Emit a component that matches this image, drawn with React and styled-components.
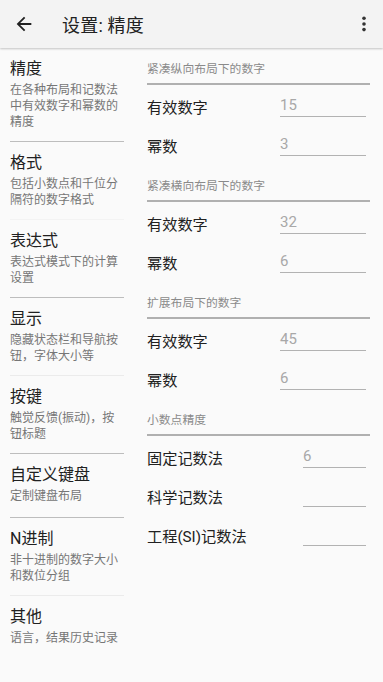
import styled, { createGlobalStyle } from "styled-components";

const GlobalStyle = createGlobalStyle`
  html, body {
    margin: 0;
    padding: 0;
    background: #fafafa;
  }
  body {
    font-family: Roboto, "Noto Sans CJK SC", sans-serif;
    color: #212121;
  }
`;

const Page = styled.div`
  width: 383px;
  height: 682px;
  display: flex;
  flex-direction: column;
  background: #fafafa;
  overflow: hidden;
`;

const AppBar = styled.header`
  height: 48px;
  flex-shrink: 0;
  display: flex;
  align-items: center;
  background: #f3f3f3;
  box-shadow: 0 1px 2px rgba(0, 0, 0, 0.22);
  position: relative;
  z-index: 1;
`;

const IconButton = styled.div`
  width: 24px;
  height: 24px;
  display: flex;
  align-items: center;
  justify-content: center;
  margin-left: ${(p) => p.$ml || 0}px;
  margin-right: ${(p) => p.$mr || 0}px;
`;

const Title = styled.h1`
  margin: 0 0 0 26px;
  flex: 1;
  font-size: 18px;
  font-weight: 400;
  color: #212121;
  letter-spacing: 0.2px;
`;

const Body = styled.div`
  flex: 1;
  display: flex;
`;

const Nav = styled.nav`
  width: 114px;
  padding-left: 10px;
  flex-shrink: 0;
`;

const NavItem = styled.div`
  padding: 10px 0 ${(p) => (p.$single ? 13 : 11)}px;
  border-bottom: 1px solid ${(p) => p.$line || "transparent"};
`;

const NavTitle = styled.div`
  font-size: 16px;
  line-height: 21px;
  color: #212121;
`;

const NavSub = styled.div`
  margin-top: 3px;
  font-size: 12px;
  line-height: 16px;
  color: #767676;
`;

const Panel = styled.main`
  margin-left: 23px;
  width: 223px;
`;

const Section = styled.section`
  padding-top: 14px;

  &:first-child {
    padding-top: 13px;
  }
`;

const SectionHeader = styled.div`
  font-size: 11.8px;
  line-height: 16px;
  color: #8a8a8a;
  padding-bottom: 6px;
  border-bottom: 2px solid #b0b0b0;
`;

const Rows = styled.div`
  padding-top: 1px;
`;

const Row = styled.div`
  height: 39px;
  display: flex;
  align-items: center;
  justify-content: space-between;
  padding-right: 4px;
`;

const Label = styled.div`
  font-size: 15.2px;
  color: #212121;
`;

const Field = styled.div`
  width: ${(p) => p.$w}px;
  height: 22px;
  line-height: 22px;
  font-size: 15px;
  color: #a8a8a8;
  border-bottom: 1.5px solid #b2b2b2;
  font-family: Roboto, sans-serif;
`;

const navItems = [
  { t: "精度", s: ["在各种布局和记数法", "中有效数字和幂数的", "精度"], line: "#bdbdbd" },
  { t: "格式", s: ["包括小数点和千位分", "隔符的数字格式"], line: "#f3f3f3" },
  { t: "表达式", s: ["表达式模式下的计算", "设置"], line: "#bdbdbd" },
  { t: "显示", s: ["隐藏状态栏和导航按", "钮，字体大小等"], line: "#ebebeb" },
  { t: "按键", s: ["触觉反馈(振动)，按", "钮标题"], line: "#bdbdbd" },
  { t: "自定义键盘", s: ["定制键盘布局"], line: "#bdbdbd" },
  { t: "N进制", s: ["非十进制的数字大小", "和数位分组"], line: "#ebebeb" },
  { t: "其他", s: ["语言，结果历史记录"] },
];

const sections = [
  { h: "紧凑纵向布局下的数字", w: 86, rows: [["有效数字", "15"], ["幂数", "3"]] },
  { h: "紧凑横向布局下的数字", w: 86, rows: [["有效数字", "32"], ["幂数", "6"]] },
  { h: "扩展布局下的数字", w: 86, rows: [["有效数字", "45"], ["幂数", "6"]] },
  { h: "小数点精度", w: 63, rows: [["固定记数法", "6"], ["科学记数法", ""], ["工程(SI)记数法", ""]] },
];

const App = () => {
  return (
    <Page>
      <GlobalStyle />
      <AppBar>
        <IconButton $ml={12}>
          <svg width="22" height="22" viewBox="0 0 24 24">
            <path d="M20 11H7.83l5.59-5.59L12 4l-8 8 8 8 1.41-1.41L7.83 13H20v-2z" fill="#212121" />
          </svg>
        </IconButton>
        <Title>设置: 精度</Title>
        <IconButton $mr={7}>
          <svg width="24" height="24" viewBox="0 0 24 24">
            <circle cx="12" cy="6.2" r="1.8" fill="#333" />
            <circle cx="12" cy="12" r="1.8" fill="#333" />
            <circle cx="12" cy="17.6" r="1.8" fill="#333" />
          </svg>
        </IconButton>
      </AppBar>
      <Body>
        <Nav>
          {navItems.map((item) => (
            <NavItem key={item.t} $line={item.line} $single={item.s.length === 1}>
              <NavTitle>{item.t}</NavTitle>
              <NavSub>
                {item.s.map((line) => (
                  <div key={line}>{line}</div>
                ))}
              </NavSub>
            </NavItem>
          ))}
        </Nav>
        <Panel>
          {sections.map((sec) => (
            <Section key={sec.h}>
              <SectionHeader>{sec.h}</SectionHeader>
              <Rows>
                {sec.rows.map(([label, value]) => (
                  <Row key={label}>
                    <Label>{label}</Label>
                    <Field $w={sec.w}>{value}</Field>
                  </Row>
                ))}
              </Rows>
            </Section>
          ))}
        </Panel>
      </Body>
    </Page>
  );
};

export default App;
